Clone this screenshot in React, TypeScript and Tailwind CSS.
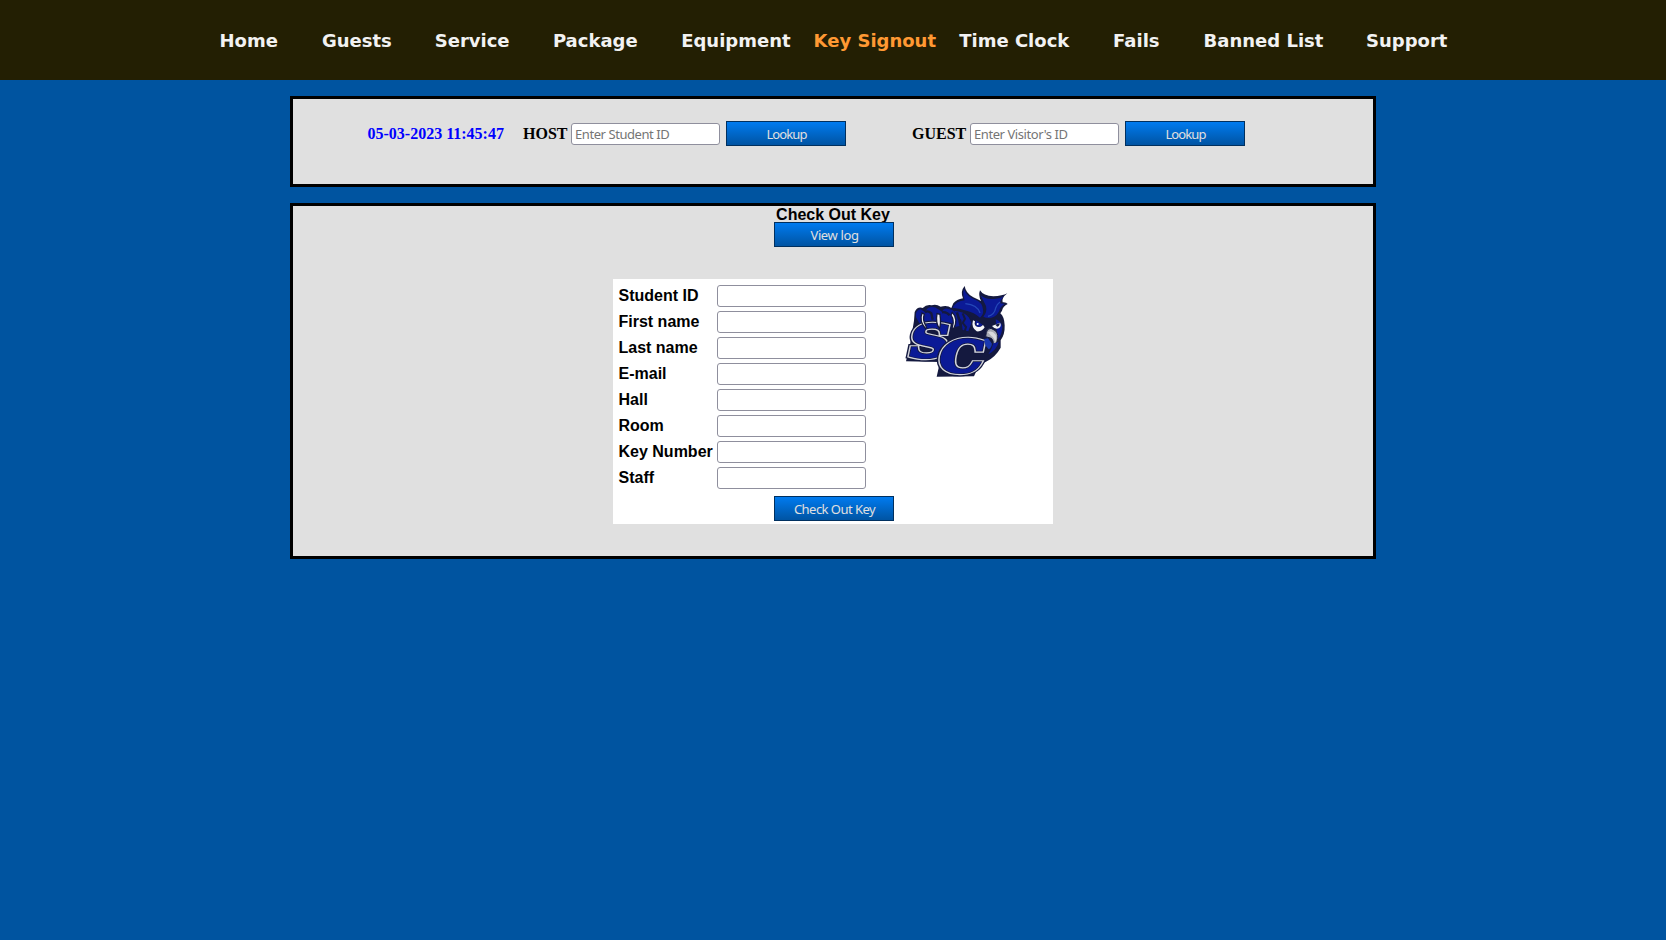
import React from "react";

const nav: [string, string][] = [
  ["Home", "ml-[219.5px]"],
  ["Guests", "ml-[44px]"],
  ["Service", "ml-[43px]"],
  ["Package", "ml-[43.3px]"],
  ["Equipment", "ml-[43.5px]"],
  ["Key Signout", "ml-[23px] text-[#ff9933]"],
  ["Time Clock", "ml-[23.2px]"],
  ["Fails", "ml-[43.8px]"],
  ["Banned List", "ml-[44px]"],
  ["Support", "ml-[42.7px]"],
];

const fields = ["Student ID", "First name", "Last name", "E-mail", "Hall", "Room", "Key Number", "Staff"];

const inputClass =
  "h-[22px] w-[149px] shrink-0 rounded-[3px] border border-[#8f8f9d] bg-white px-[3px] pt-px font-['Noto_Sans',sans-serif] text-[13px] font-normal tracking-[-0.43px] outline-none placeholder:text-[#757575]";

function Button({ tracking, children }: { tracking: string; children: React.ReactNode }) {
  return (
    <button className={`h-[25px] w-[120px] shrink-0 border border-[#00305f] bg-linear-to-b from-[#007bf0] to-[#0054a3] pt-px pl-px font-['Noto_Sans',sans-serif] text-[13px] leading-[22px] font-normal text-[#e0e0e0] ${tracking}`}>
      {children}
    </button>
  );
}

function LogoLetter({ x, y, children }: { x: number; y: number; children: string }) {
  const place = `translate(${x} ${y}) skewX(-12) scale(1.26 1)`;
  const common = "font-['DejaVu_Serif',serif] text-[132px] font-bold tracking-normal";
  return (
    <g transform={place} strokeLinejoin="miter">
      <text className={common} fill="#14193f" stroke="#14193f" strokeWidth="23">{children}</text>
      <text className={common} fill="#d2d4dd" stroke="#d2d4dd" strokeWidth="16">{children}</text>
      <text className={common} fill="#14193f" stroke="#14193f" strokeWidth="9">{children}</text>
      <text className={common} fill="#0b1a96" stroke="#0b1a96" strokeWidth="5">{children}</text>
    </g>
  );
}

function OwlLogo() {
  return (
    <svg className="h-[100px] w-[112px]" viewBox="0 0 336 300">
      <path d="M42 116L44 90Q52 73 68 78Q80 66 95 70Q108 65 122 74Q142 68 154 78L160 64Q170 52 189 49Q180 28 194 12Q197 34 220 46Q234 52 243 57Q234 40 240 25Q250 42 280 43Q307 42 322 34Q304 48 308 61Q319 60 323 66Q309 72 306 86L301 94Q313 104 314 130Q315 158 302 175L302 197Q286 226 258 239L237 249L222 283L110 284L120 240L18 238L28 200Z" fill="#14193f" />
      <path d="M158 77Q168 58 194 55Q187 35 192 22Q201 45 226 53Q247 61 249 82Q252 97 240 107Q221 91 202 87Q182 80 158 77Z" fill="#0b1a96" />
      <path d="M242 40Q257 54 286 50Q302 50 312 43Q300 54 301 64L314 66Q299 75 298 87Q292 99 281 105Q264 111 250 104Q262 90 258 72Z" fill="#0b1a96" />
      <path d="M196 65Q232 68 240 93M264 103Q284 98 287 78Q292 65 300 60" fill="none" stroke="#2448b8" strokeWidth="4" />
      <path d="M162 86Q190 88 206 104L214 123L205 148L188 144L184 114ZM287 112Q304 119 307 134Q306 158 294 172L290 144Z" fill="#0b1a96" />
      <path d="M188 94L195 111L188 123L198 135L194 149M204 99L217 112M229 153L243 158L238 170" fill="none" stroke="#14193f" strokeWidth="6" />
      <path d="M48 106Q45 85 61 82L74 89L84 78Q100 70 115 82L126 89Q134 74 149 82Q165 85 172 102L178 132L154 137L61 129Z" fill="#0b1a96" />
      <path d="M75 91Q83 84 94 94L98 113M126 91Q139 88 149 100M171 91L177 111" fill="none" stroke="#14193f" strokeWidth="7" />
      <LogoLetter x={19} y={225}>S</LogoLetter>
      <LogoLetter x={109} y={269}>C</LogoLetter>
      <path d="M219 115Q213 137 230 148Q246 150 254 136L249 129Q239 140 227 132Q222 125 225 118Z" fill="#f6f6f8" />
      <path d="M228 115L248 128Q240 138 229 132Q224 125 228 115Z" fill="#0b1a96" />
      <circle cx="233" cy="126" r="3" fill="#fff" />
      <path d="M276 132L300 122Q306 132 296 139Q286 144 276 132Z" fill="#f6f6f8" />
      <path d="M286 128L299 123Q299 133 292 134Z" fill="#14193f" />
      <path d="M259 151Q261 139 273 139L286 146Q298 158 291 178Q286 189 280 190Q281 174 274 169L257 164Z" fill="#a9acb5" stroke="#14193f" strokeWidth="3" />
      <path d="M263 150Q277 144 287 158Q291 167 286 181Q283 167 274 162Z" fill="#d9dade" />
      <path d="M252 171L264 169L276 185Q274 198 266 202L256 190Z" fill="#1938b0" />
      <path d="M280 184Q290 182 296 179Q292 201 265 217Q276 201 280 184Z" fill="#0b1a96" />
      <path d="M66 93Q57 117 75 138Q82 143 77 130Q67 113 73 97Z" fill="#f1f1f3" stroke="#14193f" strokeWidth="4" />
      <path d="M111 95Q106 122 118 140Q124 127 120 97Z" fill="#f1f1f3" stroke="#14193f" strokeWidth="4" />
      <path d="M157 91Q175 111 162 138Q154 144 158 130Q163 115 153 99Z" fill="#f1f1f3" stroke="#14193f" strokeWidth="4" />
    </svg>
  );
}

export default function App() {
  return (
    <div className="flex min-h-screen flex-col items-center bg-[#0054a0]">
      <header className="flex h-20 w-full items-center bg-[#231f03] font-['DejaVu_Sans',sans-serif] text-[18px] font-bold text-[#f2f2f2]">
        {nav.map(([label, cls]) => (
          <a key={label} className={`whitespace-nowrap ${cls}`}>{label}</a>
        ))}
      </header>
      <section className="mt-4 flex h-[91px] w-[1086px] items-start border-[3px] border-black bg-[#e0e0e0] pt-[22px] font-['Liberation_Serif',serif] text-base font-bold leading-[25px]">
        <span className="ml-[74.5px] w-[155.5px] text-[#0000ff]">05-03-2023 11:45:47</span>
        <label className="w-[48px]">HOST</label>
        <input className={`${inputClass} mt-[2px] mr-[6px]`} placeholder="Enter Student ID" />
        <Button tracking="tracking-[-0.9px]">Lookup</Button>
        <label className="ml-[66px] w-[58px]">GUEST</label>
        <input className={`${inputClass} mt-[2px] mr-[6px]`} placeholder="Enter Visitor's ID" />
        <Button tracking="tracking-[-0.9px]">Lookup</Button>
      </section>
      <section className="mt-4 flex h-[356px] w-[1086px] flex-col items-center border-[3px] border-black bg-[#e0e0e0] font-['Liberation_Sans',sans-serif] text-base font-bold">
        <h1 className="h-4 leading-[18px]">Check Out Key</h1>
        <div className="ml-[2px] flex"><Button tracking="tracking-[-0.37px]">View log</Button></div>
        <form className="mt-8 flex h-[245px] w-[440px] flex-col bg-white">
          <div className="flex">
            <div className="flex flex-col gap-1 pt-[6px] pl-[5.5px]">
              {fields.map((f) => (
                <label key={f} className="flex h-[22px] items-center">
                  <span className="w-[98.5px] leading-[22px]">{f}</span>
                  <input className={inputClass} />
                </label>
              ))}
            </div>
            <div className="ml-[34px] pt-[3px]"><OwlLogo /></div>
          </div>
          <div className="ml-[161px] mt-[7px] flex"><Button tracking="tracking-[-0.54px]">Check Out Key</Button></div>
        </form>
      </section>
    </div>
  );
}
